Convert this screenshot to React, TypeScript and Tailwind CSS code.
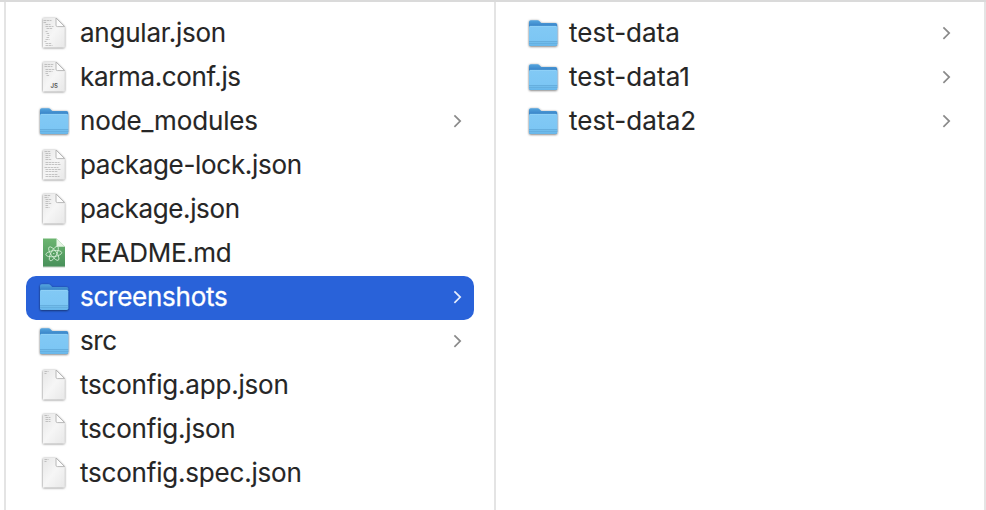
import React from "react";

type Kind = "folder" | "file" | "atom";
interface Entry {
  name: string;
  kind: Kind;
  selected?: boolean;
  badge?: string;
  lines?: number[][];
  tracking: string;
}

// Each preview line is [x, y, width] inside the 32x44 icon box.
const angularLines = [
  [7, 8, 8], [7, 10, 3], [9, 12, 5], [9, 14, 8], [10, 16, 6], [9, 19, 2], [10, 21, 3], [11, 23, 2],
  [10, 25, 3], [9, 27, 4], [8, 29, 2], [9, 31, 6], [9, 33, 7],
];
const karmaLines = [[8, 8, 9], [8, 10, 8], [9, 13, 9], [9, 15, 7], [9, 17, 3], [10, 19, 3]];
const lockLines = [
  [8, 7, 6], [9, 9, 5], [9, 11, 5], [9, 13, 4], [9, 15, 6], [9, 18, 14], [9, 20, 15], [8, 23, 14],
  [9, 25, 15], [9, 27, 12], [9, 30, 12], [9, 32, 14],
];
const packageLines = [[8, 7, 6], [8, 9, 4], [9, 11, 6], [9, 13, 4], [9, 15, 6], [9, 17, 3], [9, 19, 4]];

const project: Entry[] = [
  { name: "angular.json", kind: "file", lines: angularLines, tracking: "tracking-[-0.24px]" },
  { name: "karma.conf.js", kind: "file", lines: karmaLines, badge: "JS", tracking: "tracking-[-0.36px]" },
  { name: "node_modules", kind: "folder", tracking: "tracking-[-0.14px]" },
  { name: "package-lock.json", kind: "file", lines: lockLines, tracking: "tracking-[-0.31px]" },
  { name: "package.json", kind: "file", lines: packageLines, tracking: "tracking-[-0.37px]" },
  { name: "README.md", kind: "atom", tracking: "tracking-[-0.33px]" },
  { name: "screenshots", kind: "folder", selected: true, tracking: "tracking-[-0.26px]" },
  { name: "src", kind: "folder", tracking: "tracking-[-0.4px]" },
  { name: "tsconfig.app.json", kind: "file", lines: [[8, 7, 4], [8, 9, 2]], tracking: "tracking-[-0.2px]" },
  { name: "tsconfig.json", kind: "file", lines: [[8, 7, 4], [9, 9, 5], [9, 11, 5], [9, 13, 5]], tracking: "tracking-[-0.2px]" },
  { name: "tsconfig.spec.json", kind: "file", lines: [[8, 7, 4], [8, 9, 2]], tracking: "tracking-[-0.2px]" },
];
const tests: Entry[] = [
  { name: "test-data", kind: "folder", tracking: "tracking-[0px]" },
  { name: "test-data1", kind: "folder", tracking: "tracking-[0.05px]" },
  { name: "test-data2", kind: "folder", tracking: "tracking-[0.05px]" },
];

function Defs() {
  return (
    <svg width="0" height="0" className="absolute">
      <defs>
        <linearGradient id="paper" x1="0" y1="0" x2="1" y2="1">
          <stop offset="0" stopColor="#e6e6e6" />
          <stop offset="0.5" stopColor="#f6f6f6" />
          <stop offset="1" stopColor="#e8e8e8" />
        </linearGradient>
        <linearGradient id="front" x1="0" y1="0" x2="0" y2="1">
          <stop offset="0" stopColor="#82c9f5" />
          <stop offset="0.75" stopColor="#7cc6f4" />
          <stop offset="1" stopColor="#66b5e8" />
        </linearGradient>
        <linearGradient id="back" x1="0" y1="0" x2="0" y2="1">
          <stop offset="0" stopColor="#55a5de" />
          <stop offset="0.25" stopColor="#337fc5" />
        </linearGradient>
        <linearGradient id="leaf" x1="0" y1="0" x2="0" y2="1">
          <stop offset="0" stopColor="#6cb570" />
          <stop offset="1" stopColor="#48905a" />
        </linearGradient>
        <filter id="shade" x="-20%" y="-20%" width="140%" height="140%">
          <feDropShadow dx="0" dy="0.6" stdDeviation="0.8" floodColor="#000" floodOpacity="0.6" />
        </filter>
      </defs>
    </svg>
  );
}

function Folder() {
  return (
    <svg viewBox="0 0 32 44" className="h-11 w-8 shrink-0">
      <g filter="url(#shade)">
        <path d="M2 10Q2 8.3 3.7 8.3H10.5Q11.7 8.3 12.5 9.2L14.2 11H28.5Q30.2 11 30.2 12.6V32Q30.2 34 28.2 34H4Q2 34 2 32Z" fill="url(#back)" />
        <path d="M2 15.3Q2 14 3.3 14H28.9Q30.2 14 30.2 15.3V32.3Q30.2 34 28.5 34H3.7Q2 34 2 32.3Z" fill="url(#front)" />
      </g>
      <path d="M3 14.3H29.2" stroke="#99d5f8" strokeWidth="0.7" />
      <path d="M2 29.5H30.2M2 31.3H30.2" stroke="#599fd0" strokeWidth="0.6" />
    </svg>
  );
}

function FileIcon({ lines = [], badge }: { lines?: number[][]; badge?: string }) {
  return (
    <svg viewBox="0 0 32 44" className="h-11 w-8 shrink-0">
      <g filter="url(#shade)">
        <path d="M5 6H18L26.6 14.6V34.4Q26.6 35.2 25.8 35.2H5Z" fill="url(#paper)" />
      </g>
      {lines.map(([x, y, w], i) => (
        <path key={i} d={`M${x - 1.5} ${y + 0.5}h${w}`} stroke="#8b8b8b" strokeWidth="0.9" strokeDasharray="2.6 0.5" opacity="0.5" />
      ))}
      <path d="M18 6V13.2Q18 14.6 19.4 14.6H26.6Z" fill="#fcfcfc" stroke="#b0b0b0" strokeWidth="0.9" strokeLinejoin="round" />
      {badge && (
        <text x="16.3" y="31.7" textAnchor="middle" fontFamily="Inter, sans-serif" fontSize="6" fontWeight="600" fill="#555" className="antialiased">
          {badge}
        </text>
      )}
    </svg>
  );
}

function AtomFile() {
  return (
    <svg viewBox="0 0 32 44" className="h-11 w-8 shrink-0">
      <path d="M5 6.4H18.5L27 14.8V34.8H5Z" fill="url(#leaf)" />
      <path d="M5 35H27" stroke="#a9b8ab" strokeWidth="0.7" />
      <path d="M18.5 6.4V14.8H27Z" fill="#e6f5e4" />
      <g fill="none" stroke="#d9f0da" strokeWidth="0.8">
        <ellipse cx="15.8" cy="21.6" rx="8" ry="3" transform="rotate(-8 15.8 21.6)" />
        <ellipse cx="15.8" cy="21.6" rx="8" ry="2.9" transform="rotate(55 15.8 21.6)" />
        <ellipse cx="15.8" cy="21.6" rx="8" ry="2.9" transform="rotate(118 15.8 21.6)" />
      </g>
      <circle cx="15.8" cy="21.6" r="0.7" fill="#d9f0da" />
    </svg>
  );
}

function Row({ entry }: { entry: Entry }) {
  const { kind, name, selected, tracking } = entry;
  return (
    <li className={`flex h-11 items-center rounded-[10px] pr-3 pl-3 ${selected ? "bg-[#2962d9] text-white" : "text-[#262626]"}`}>
      {kind === "folder" && <Folder />}
      {kind === "file" && <FileIcon lines={entry.lines} badge={entry.badge} />}
      {kind === "atom" && <AtomFile />}
      <span className={`ml-2.5 flex-1 pb-0.5 text-[26px] leading-[42px] whitespace-nowrap ${selected ? "[-webkit-text-stroke:0.3px_currentColor]" : "[-webkit-text-stroke:0.12px_currentColor]"} ${tracking}`}>{name}</span>
      {kind === "folder" && (
        <svg viewBox="0 0 10 44" className="h-11 w-2.5 shrink-0">
          <path d="M2.4 15.4L8.2 21.1L2.4 26.8" fill="none" stroke={selected ? "#e6edfc" : "#8a8a8a"} strokeWidth="1.7" />
        </svg>
      )}
    </li>
  );
}

export default function App() {
  return (
    <div className="flex h-[510px] w-[986px] overflow-hidden border-t-2 border-[#dadada] bg-white font-['Inter','Liberation_Sans',sans-serif]">
      <Defs />
      <ul className="ml-1 w-[490px] shrink-0 border-l-2 border-[#e4e4e4] pt-2.5 pr-5 pl-5">
        {project.map((e) => <Row key={e.name} entry={e} />)}
      </ul>
      <ul className="w-[492px] shrink-0 border-x-2 border-[#e4e4e4] pt-2.5 pr-[21px] pl-[19px]">
        {tests.map((e) => <Row key={e.name} entry={e} />)}
      </ul>
    </div>
  );
}
